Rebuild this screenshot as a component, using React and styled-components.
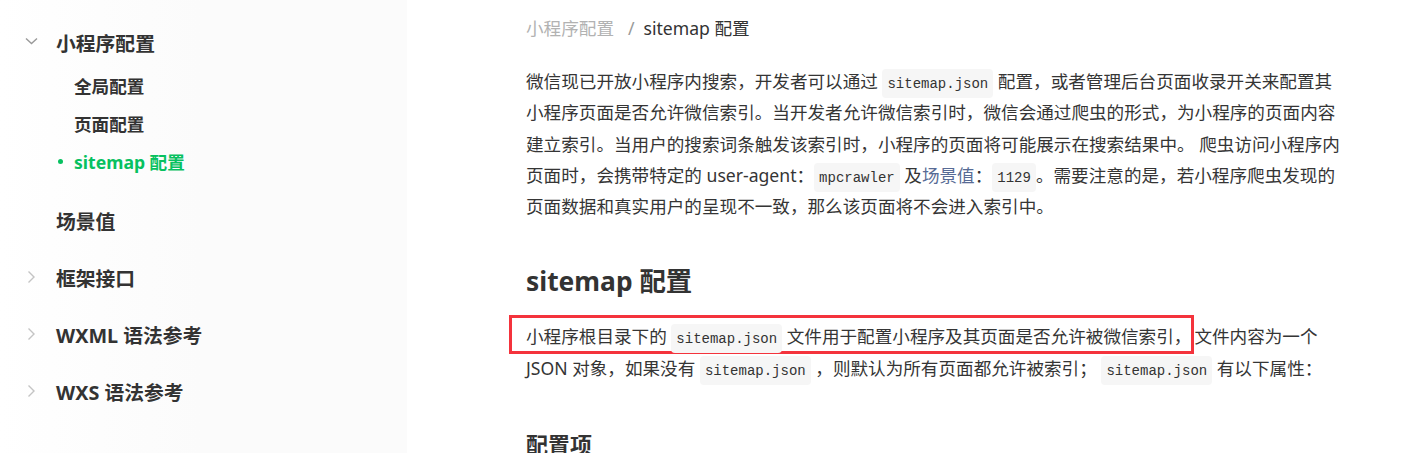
import React from 'react';
import styled, { createGlobalStyle } from 'styled-components';

const GlobalStyle = createGlobalStyle`
  html, body {
    margin: 0;
    padding: 0;
    background: #fff;
    overflow: hidden;
  }
  body {
    font-family: "Noto Sans", "Noto Sans CJK SC", sans-serif;
    color: #333;
  }
`;

const nav = [
  {
    title: '小程序配置',
    arrow: 'down',
    children: [
      { label: '全局配置' },
      { label: '页面配置' },
      { label: 'sitemap 配置', active: true },
    ],
  },
  { title: '场景值' },
  { title: '框架接口', arrow: 'right' },
  { title: 'WXML 语法参考', arrow: 'right' },
  { title: 'WXS 语法参考', arrow: 'right' },
];

const Chevron = ({ dir }) => {
  if (!dir) return <ChevronBox />;
  return (
    <ChevronBox>
      <svg width="14" height="14" viewBox="0 0 14 14" fill="none">
        {dir === 'down' ? (
          <polyline points="2,3.5 7.5,8.5 13,3.5" stroke="#999" strokeWidth="1.4" />
        ) : (
          <polyline points="4.5,1.5 10,7 4.5,12.5" stroke="#c4c4c4" strokeWidth="1.4" />
        )}
      </svg>
    </ChevronBox>
  );
};

const Sidebar = () => (
  <StyledSidebar>
    {nav.map((group) => (
      <Group key={group.title}>
        <Title>
          <Chevron dir={group.arrow} />
          {group.title}
        </Title>
        {group.children && (
          <SubList>
            {group.children.map((item) => (
              <SubItem key={item.label} $active={item.active}>
                <Marker $active={item.active} />
                {item.label}
              </SubItem>
            ))}
          </SubList>
        )}
      </Group>
    ))}
  </StyledSidebar>
);

const App = () => {
  return (
    <Page>
      <GlobalStyle />
      <Sidebar />
      <Main>
        <Breadcrumb>
          <Crumb $muted>小程序配置</Crumb>
          <Separator>/</Separator>
          <Crumb>sitemap 配置</Crumb>
        </Breadcrumb>
        <Para>
          微信现已开放小程序内搜索，开发者可以通过 <Code>sitemap.json</Code> 配置，或者管理后台页面收录开关来配置其小程序页面是否允许微信索引。当开发者允许微信索引时，微信会通过爬虫的形式，为小程序的页面内容建立索引。当用户的搜索词条触发该索引时，小程序的页面将可能展示在搜索结果中。 爬虫访问小程序内页面时，会携带特定的 user-agent：<Code>mpcrawler</Code> 及<Link>场景值</Link>：<Code>1129</Code>。需要注意的是，若小程序爬虫发现的页面数据和真实用户的呈现不一致，那么该页面将不会进入索引中。
        </Para>
        <H2>sitemap 配置</H2>
        <Para $top={22}>
          <Mark>
            小程序根目录下的 <Code>sitemap.json</Code> 文件用于配置小程序及其页面是否允许被微信索引，
          </Mark>
          文件内容为一个 JSON 对象，如果没有 <Code>sitemap.json</Code> ，则默认为所有页面都允许被索引； <Code>sitemap.json</Code> 有以下属性：
        </Para>
        <H3>配置项</H3>
      </Main>
    </Page>
  );
};

const Page = styled.div`
  display: flex;
  min-height: 100vh;
`
const StyledSidebar = styled.nav`
  width: 407px;
  flex-shrink: 0;
  box-sizing: border-box;
  padding-top: 27px;
  background: linear-gradient(90deg, #fff 0, #fbfbfb 200px, #fbfbfb 100%);
  color: #333;
`
const Group = styled.div`
  margin-bottom: 27px;
`
const Title = styled.div`
  display: flex;
  align-items: center;
  height: 30px;
  padding-left: 24px;
  font-size: 19.8px;
  font-weight: 700;
`
const ChevronBox = styled.span`
  display: flex;
  align-items: center;
  width: 14px;
  height: 14px;
  margin-right: 18px;
`
const SubList = styled.div`
  margin-top: 9px;
  margin-bottom: -2px;
`
const SubItem = styled.div`
  display: flex;
  align-items: center;
  height: 38px;
  padding-left: 56px;
  font-size: 17.6px;
  font-weight: 700;
  color: ${props => props.$active ? '#07c160' : '#333'};
`
const Marker = styled.span`
  width: 18px;
  display: flex;
  align-items: center;
  &::before {
    content: '';
    display: ${props => props.$active ? 'block' : 'none'};
    width: 5px;
    height: 5px;
    margin-left: 2px;
    border-radius: 50%;
    background: #07c160;
  }
`
const Main = styled.main`
  width: 818px;
  padding: 13px 0 0 119px;
`
const Breadcrumb = styled.div`
  font-size: 17.6px;
  line-height: 30px;
`
const Crumb = styled.span`
  color: ${props => props.$muted ? '#b2b2b2' : '#333'};
`
const Separator = styled.span`
  color: #999;
  margin: 0 9px 0 14px;
`
const Para = styled.p`
  margin: ${props => props.$top || 23}px 0 0;
  font-size: 17.6px;
  line-height: 31.3px;
  color: #353535;
`
const Code = styled.code`
  font-family: "Liberation Mono", "DejaVu Sans Mono", monospace;
  font-size: 14px;
  line-height: 1;
  padding: 7px 5px 6px;
  border-radius: 4px;
  background: #f6f6f6;
  color: #333;
`
const Link = styled.a`
  color: #576b95;
  text-decoration: none;
`
const Mark = styled.span`
  border: 3px solid #f4333c;
  padding: 6px 0 3px 14px;
  margin-left: -17px;
`
const H2 = styled.h2`
  margin: 41px 0 0;
  font-size: 26.4px;
  line-height: 36px;
  font-weight: 700;
  color: #333;
`
const H3 = styled.h3`
  margin: 45px 0 0;
  font-size: 22px;
  line-height: 30px;
  font-weight: 700;
  color: #333;
`

export default App;
